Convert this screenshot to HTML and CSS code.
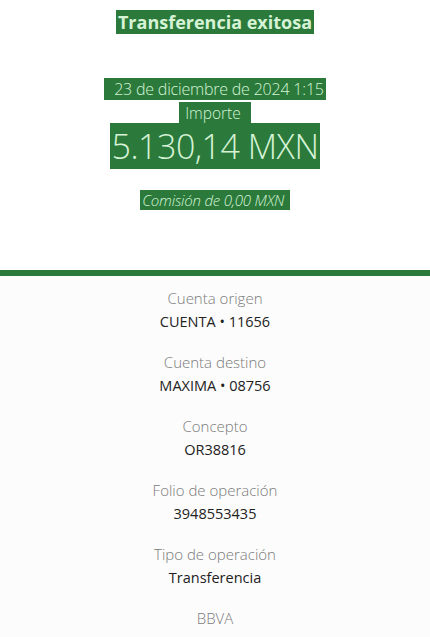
FILE: index.html
```html
<!DOCTYPE html>
<html lang="es">
<head>
    <meta charset="UTF-8">
    <meta name="viewport" content="width=device-width, initial-scale=1.0">
    <title>Transferencia exitosa</title>
    <link rel="stylesheet" href="styles.css">
</head>
<body>
    <div class="header">
        <h1><span class="mark">Transferencia exitosa</span></h1>
        <p class="date"><span class="mark">&nbsp;&nbsp;23 de diciembre de 2024 1:15</span></p>
        <p class="label"><span class="mark">&nbsp;Importe&nbsp;&nbsp;</span></p>
        <p class="amount"><span class="mark">5.130,14 MXN</span></p>
        <p class="fee"><span class="mark">Comisión de 0,00 MXN&nbsp;</span></p>
    </div>
    <div class="bar"></div>
    <div class="details">
        <div class="item">
            <div class="key">Cuenta origen</div>
            <div class="value">CUENTA • 11656</div>
        </div>
        <div class="item">
            <div class="key">Cuenta destino</div>
            <div class="value">MAXIMA • 08756</div>
        </div>
        <div class="item">
            <div class="key">Concepto</div>
            <div class="value">OR38816</div>
        </div>
        <div class="item">
            <div class="key">Folio de operación</div>
            <div class="value">3948553435</div>
        </div>
        <div class="item">
            <div class="key">Tipo de operación</div>
            <div class="value">Transferencia</div>
        </div>
        <div class="item last">
            <div class="key">BBVA</div>
        </div>
    </div>
</body>
</html>
```

FILE: styles.css
```css
body {
    margin: 0;
    font-family: 'Open Sans', 'Noto Sans', sans-serif;
    background: #fff;
    text-align: center;
}
.header {
    height: 270px;
    padding-top: 11px;
    box-sizing: border-box;
}
.mark {
    background: #2b7a3b;
    color: #d6f3d6;
    padding: 0 2px;
}
h1 {
    margin: 0;
    font-size: 18px;
    font-weight: 700;
    line-height: 22px;
}
.date {
    margin: 46px 0 0;
    font-size: 16px;
    font-weight: 300;
    letter-spacing: -0.2px;
    line-height: 20px;
}
.label {
    margin: 4px 0 0;
    font-size: 15.5px;
    font-weight: 300;
    line-height: 20px;
}
.amount {
    margin: 4px 0 0;
    font-size: 34px;
    font-weight: 300;
    letter-spacing: -0.5px;
    line-height: 38px;
}
.fee {
    margin: 26px 0 0;
    font-size: 15px;
    font-weight: 300;
    font-style: italic;
    letter-spacing: -0.2px;
    line-height: 19px;
}
.bar {
    height: 6px;
    background: #2b7a3b;
}
.details {
    background: #fcfcfc;
    padding-top: 12px;
    height: 361px;
    box-sizing: border-box;
}
.item {
    height: 64px;
}
.item.last {
    height: 30px;
}
.key {
    color: #7a7a7a;
    font-size: 15px;
    font-weight: 300;
    line-height: 20px;
}
.value {
    color: #222;
    font-size: 14.5px;
    font-weight: 400;
    line-height: 20px;
    margin-top: 4px;
}
```
